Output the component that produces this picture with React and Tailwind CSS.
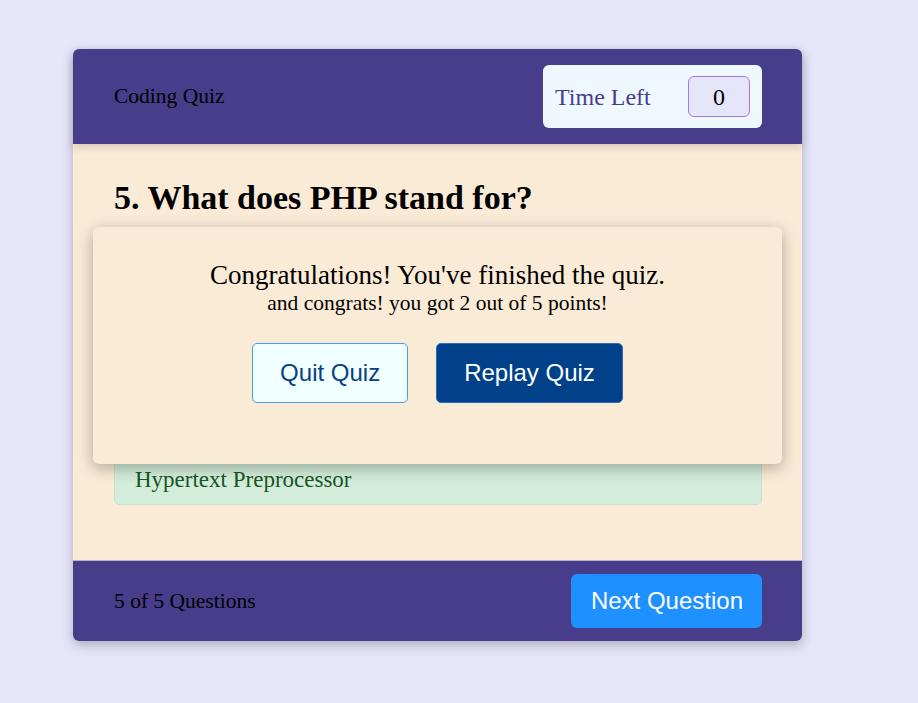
import React from "react";

export default function App() {
  return (
    <main className="min-h-screen bg-[#e6e6fa] pt-[49px] pl-[73px] font-['Liberation_Serif',serif]">
      <div className="relative w-[729px] rounded-[6px] bg-[#faebd7] shadow-[0_4px_12px_rgba(0,0,0,0.25)]">
        {/* Header */}
        <header className="relative z-10 flex h-[95px] items-center justify-between rounded-t-[6px] bg-[#483d8b] pl-[41px] pr-10 shadow-[0_3px_8px_rgba(0,0,0,0.15)]">
          <span className="text-[21.5px] text-black">Coding Quiz</span>
          <div className="flex h-[63px] w-[219px] items-center justify-between rounded-[6px] bg-[#f0f8ff] pl-3 pr-3">
            <span className="text-[24px] text-[#483d8b]">Time Left</span>
            <div className="flex h-[41px] w-[62px] items-center justify-center rounded-[6px] border border-[#a676ee] bg-[#e6e6fa] text-[24px] text-black">
              0
            </div>
          </div>
        </header>

        {/* Question (answers above the last one sit under the result modal) */}
        <section className="pl-[41px] pr-10 pt-[34px] pb-[55px]">
          <h2 className="text-[34px] font-bold leading-[39px] text-black">5. What does PHP stand for?</h2>
          <div className="mt-[238px] rounded-[5px] border border-[#c3e6cb] bg-[#d4edda] px-5 py-[11px] text-[23px] leading-[26px] text-[#155724]">
            Hypertext Preprocessor
          </div>
        </section>

        {/* Footer */}
        <footer className="flex h-[81px] items-center justify-between rounded-b-[6px] border-t border-[#b8b0c8] bg-[#483d8b] pl-[41px] pr-10">
          <span className="text-[21.5px] text-black">5 of 5 Questions</span>
          <button className="h-[54px] rounded-[6px] bg-[#1e90ff] pl-5 pr-[19px] font-['Liberation_Sans',Arial,sans-serif] text-[24px] text-white">
            Next Question
          </button>
        </footer>

        {/* Result modal */}
        <div className="absolute top-[178px] left-5 right-5 z-20 flex h-[237px] flex-col items-center rounded-[6px] bg-[#faebd7] pt-[33px] shadow-[0_4px_16px_rgba(0,0,0,0.3)]">
          <p className="text-[27px] leading-[31px] text-black">Congratulations! You've finished the quiz.</p>
          <p className="text-[21.5px] leading-[24px] text-black">and congrats! you got 2 out of 5 points!</p>
          <div className="mt-[28px] flex gap-[28px] font-['Liberation_Sans',Arial,sans-serif] text-[24px]">
            <button className="h-[60px] rounded-[5px] border border-[#4a9bf0] bg-[#f0ffff] px-[27px] text-[#0a3f85]">
              Quit Quiz
            </button>
            <button className="h-[60px] rounded-[5px] border border-[#2a6bbf] bg-[#00418a] px-[27px] text-white">
              Replay Quiz
            </button>
          </div>
        </div>
      </div>
    </main>
  );
}
